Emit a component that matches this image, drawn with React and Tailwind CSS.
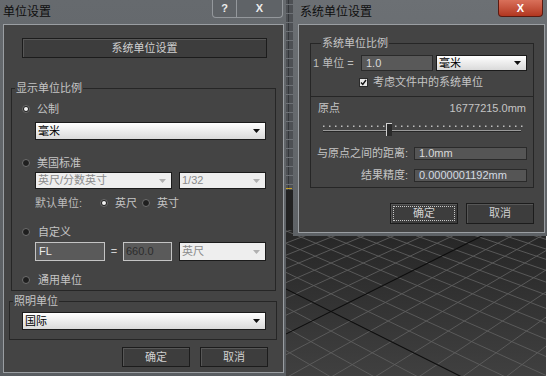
import React from "react";

const FONT = "font-['Liberation_Sans','Noto_Sans_CJK_SC',sans-serif]";

function Radio({ checked = false }) {
  return (
    <span className="flex h-[8px] w-[8px] shrink-0 items-center justify-center rounded-full border border-[#6e6e6e] bg-[#1f1f1f]">
      {checked && <span className="h-[4px] w-[4px] rounded-full bg-[#f2f2f2]" />}
    </span>
  );
}

function Select({ value, disabled = false, className = "" }) {
  return (
    <div
      className={`flex items-center justify-between border border-[#1b1b1b] pl-[2px] pr-[5px] ${
        disabled ? "bg-[#eeeeee] text-[#8a8a8a]" : "bg-gradient-to-b from-white to-[#dadada] text-black"
      } ${className}`}
    >
      <span>{value}</span>
      <svg width="7" height="4" viewBox="0 0 7 4">
        <path d="M0 0h7L3.5 4z" fill={disabled ? "#b0b0b0" : "#111"} />
      </svg>
    </div>
  );
}

function Button({ children, focused = false, className = "" }) {
  return (
    <div
      className={`relative flex items-center justify-center border border-[#1c1c1c] bg-[#3d3d3d] text-[#d0d0d0] shadow-[inset_1px_1px_0_#575757] ${className}`}
    >
      {focused && <span className="absolute inset-[2px] border border-dotted border-[#c8c8c8]" />}
      {children}
    </div>
  );
}

function Group({ label, labelLeft = "left-[3px]", className = "", children }) {
  return (
    <div className={`relative flex flex-col border border-[#262626] ${className}`}>
      {label && (
        <span className={`absolute top-[-8px] bg-[#444444] px-[1px] leading-[14px] text-[#c4c4c4] ${labelLeft}`}>
          {label}
        </span>
      )}
      {children}
    </div>
  );
}

function Viewport() {
  const O = [331, 311.5];
  const VL = [-412, -60];
  const VR = [1074, -60];
  const c = 40;
  const along = (V, t) => [O[0] + ((V[0] - O[0]) * t) / (t + c), O[1] + ((V[1] - O[1]) * t) / (t + c)];
  const seg = (V, P) => [V[0], V[1], P[0] + (P[0] - V[0]) * 6, P[1] + (P[1] - V[1]) * 6];
  const lines = [];
  for (let t = -38; t <= 220; t++) {
    lines.push({ key: `a${t}`, l: seg(VL, along(VR, t)), axis: t === 0 });
    lines.push({ key: `b${t}`, l: seg(VR, along(VL, t)), axis: t === 0 });
  }
  const ticks = [];
  for (let y = 4; y < 188; y += 9) ticks.push(y);

  return (
    <svg className="absolute left-0 top-0" width="546" height="376" viewBox="0 0 546 376">
      <defs>
        <linearGradient id="vp" gradientUnits="userSpaceOnUse" x1="0" y1="230" x2="0" y2="376">
          <stop offset="0" stopColor="#262626" />
          <stop offset="1" stopColor="#404040" />
        </linearGradient>
      </defs>
      <rect width="546" height="376" fill="url(#vp)" />
      {lines
        .filter((g) => !g.axis)
        .map((g) => (
          <line key={g.key} x1={g.l[0]} y1={g.l[1]} x2={g.l[2]} y2={g.l[3]} stroke="#5e5e5e" strokeWidth="0.9" />
        ))}
      {lines
        .filter((g) => g.axis)
        .map((g) => (
          <line key={g.key} x1={g.l[0]} y1={g.l[1]} x2={g.l[2]} y2={g.l[3]} stroke="#0c0c0c" strokeWidth="1.1" />
        ))}
      <rect x="285" y="0" width="9" height="190" fill="#4d5054" />
      <rect x="285" y="190" width="9" height="40" fill="#222222" />
      <line x1="288.5" y1="0" x2="288.5" y2="190" stroke="#33363a" />
      {ticks.map((y) => (
        <line key={y} x1="286" y1={y + 0.5} x2="293" y2={y + 0.5} stroke="#6d7176" />
      ))}
      <line x1="286" y1="188.5" x2="292" y2="188.5" stroke="#c9a326" />
    </svg>
  );
}

function Slider() {
  const dots = [];
  for (let x = 12; x <= 212; x += 6) dots.push(x);
  return (
    <svg width="222" height="20" viewBox="0 0 222 20" className="mt-[3px] block">
      {dots.map((x) => (
        <rect key={x} x={x} y="7.5" width="1.5" height="1.5" fill="#bdbdbd" />
      ))}
      <line x1="12" y1="12.5" x2="210" y2="12.5" stroke="#9a9a9a" />
      <line x1="12" y1="13.5" x2="210" y2="13.5" stroke="#262626" />
      <rect x="75" y="5" width="6" height="13" fill="#2a2a2a" />
      <line x1="75.5" y1="5" x2="75.5" y2="18" stroke="#d0d0d0" />
      <line x1="75" y1="5.5" x2="81" y2="5.5" stroke="#d0d0d0" />
    </svg>
  );
}

function UnitsWindow() {
  return (
    <div className="absolute left-0 top-0 flex h-[376px] w-[286px] flex-col bg-gradient-to-b from-[#666a6e] to-[#595d61] pb-[3px] pl-[3px] pr-[2px]">
      <div className="flex h-[24px] shrink-0 items-start justify-between">
        <span className="pt-[4px] text-[12px] leading-[16px] text-[#0e0e0e]">单位设置</span>
        <div className="mr-[1px] flex h-[18px] rounded-b-[4px] border border-t-0 border-[#94989c] bg-[#5f6367]">
          <div className="flex w-[24px] items-center justify-center border-r border-[#94989c] text-[11px] font-bold text-[#ececec]">
            ?
          </div>
          <div className="flex w-[45px] items-center justify-center text-[11px] font-bold text-[#ececec]">X</div>
        </div>
      </div>
      <div className="flex flex-1 flex-col border border-[#9a9ea2] bg-[#444444] text-[#c4c4c4]">
        <Button className="ml-[18px] mt-[13px] h-[20px] w-[245px]">系统单位设置</Button>

        <Group label="显示单位比例" className="ml-[7px] mt-[30px] h-[203px] w-[265px]">
          <div className="ml-[10px] mt-[13px] flex h-[14px] items-center gap-[7px] leading-[14px]">
            <Radio checked />
            <span>公制</span>
          </div>
          <Select value="毫米" className="ml-[23px] mt-[6px] h-[18px] w-[231px]" />

          <div className="ml-[10px] mt-[16px] flex h-[14px] items-center gap-[7px] leading-[14px]">
            <Radio />
            <span>美国标准</span>
          </div>
          <div className="ml-[23px] mt-[2px] flex gap-[7px]">
            <Select value="英尺/分数英寸" disabled className="h-[17px] w-[137px]" />
            <Select value="1/32" disabled className="h-[17px] w-[87px]" />
          </div>
          <div className="ml-[23px] mt-[7px] flex h-[14px] items-center leading-[14px]">
            <span className="w-[65px] text-[#bdbdbd]">默认单位:</span>
            <Radio checked />
            <span className="ml-[7px]">英尺</span>
            <span className="ml-[5px]">
              <Radio />
            </span>
            <span className="ml-[7px]">英寸</span>
          </div>

          <div className="ml-[10px] mt-[15px] flex h-[14px] items-center gap-[8px] leading-[14px]">
            <Radio />
            <span>自定义</span>
          </div>
          <div className="ml-[23px] mt-[3px] flex h-[19px] items-center">
            <div className="flex h-full w-[70px] items-center border border-[#c4c4c4] bg-[#5a5a5a] pl-[3px] text-[#ececec]">
              FL
            </div>
            <span className="w-[18px] text-center text-[#d0d0d0]">=</span>
            <div className="flex h-full w-[49px] items-center border border-[#c4c4c4] bg-[#5a5a5a] pl-[2px] text-[#2c2c2c]">
              660.0
            </div>
            <Select value="英尺" disabled className="ml-[7px] h-full w-[87px]" />
          </div>

          <div className="ml-[10px] mt-[12px] flex h-[14px] items-center gap-[8px] leading-[14px]">
            <Radio />
            <span>通用单位</span>
          </div>
        </Group>

        <Group label="照明单位" className="ml-[5px] mt-[10px] h-[39px] w-[268px]">
          <Select value="国际" className="ml-[12px] mt-[10px] h-[18px] w-[244px]" />
        </Group>

        <div className="mt-[7px] flex justify-end gap-[10px] pr-[15px]">
          <Button className="h-[20px] w-[68px]">确定</Button>
          <Button className="h-[20px] w-[68px]">取消</Button>
        </div>
      </div>
    </div>
  );
}

function SystemUnitsWindow() {
  return (
    <div className="absolute left-[293px] top-0 flex h-[236px] w-[254px] flex-col bg-gradient-to-b from-[#6c7074] to-[#5e6266] pb-[3px] pl-[5px] pr-[2px]">
      <div className="flex h-[24px] shrink-0 items-start justify-between">
        <span className="pl-[2px] pt-[4px] text-[12px] leading-[16px] text-[#0e0e0e]">系统单位设置</span>
        <div className="mr-[2px] flex h-[17px] w-[45px] items-center justify-center rounded-b-[4px] border border-t-0 border-[#5b1a10] bg-gradient-to-b from-[#d9705a] to-[#b2361f] text-[11px] font-bold text-white">
          X
        </div>
      </div>
      <div className="flex flex-1 flex-col border border-[#9a9ea2] bg-[#444444] text-[#c4c4c4]">
        <Group label="系统单位比例" labelLeft="left-[10px]" className="ml-[11px] mt-[18px] h-[54px] w-[224px]">
          <div className="mt-[11px] flex h-[16px] items-center">
            <span className="w-[50px] pl-[2px] text-[#bdbdbd]">1 单位 =</span>
            <div className="flex h-full w-[72px] items-center border border-[#2a2a2a] bg-[#595959] pl-[4px] text-[#dadada]">
              1.0
            </div>
            <Select value="毫米" className="ml-[3px] h-full w-[91px]" />
          </div>
          <div className="mt-[4px] flex h-[14px] items-center gap-[5px] pl-[48px] leading-[14px]">
            <span className="flex h-[9px] w-[9px] items-center justify-center border border-[#2a2a2a] bg-[#e6e6e6]">
              <svg width="7" height="7" viewBox="0 0 7 7">
                <path d="M1 3.5l1.8 2L6 1" fill="none" stroke="#111" strokeWidth="1.4" />
              </svg>
            </span>
            <span>考虑文件中的系统单位</span>
          </div>
        </Group>

        <Group className="ml-[11px] mt-[-1px] h-[92px] w-[224px]">
          <div className="mt-[4px] flex h-[14px] items-center justify-between px-[7px] leading-[14px]">
            <span>原点</span>
            <span>16777215.0mm</span>
          </div>
          <Slider />
          <div className="mt-[9px] flex h-[13px] items-center leading-[13px]">
            <span className="w-[97px] text-right">与原点之间的距离:</span>
            <div className="ml-[6px] flex h-full w-[113px] items-center border border-[#2a2a2a] bg-[#555555] pl-[4px] text-[#dadada]">
              1.0mm
            </div>
          </div>
          <div className="mt-[9px] flex h-[13px] items-center leading-[13px]">
            <span className="w-[97px] text-right">结果精度:</span>
            <div className="ml-[6px] flex h-full w-[113px] items-center border border-[#2a2a2a] bg-[#555555] pl-[4px] text-[#d4dbe2]">
              0.0000001192mm
            </div>
          </div>
        </Group>

        <div className="mt-[15px] flex justify-end gap-[8px] pr-[10px]">
          <Button focused className="h-[21px] w-[68px]">
            确定
          </Button>
          <Button className="h-[21px] w-[68px]">取消</Button>
        </div>
      </div>
    </div>
  );
}

export default function App() {
  return (
    <div className={`relative h-[379px] w-[549px] overflow-hidden bg-white text-[11px] ${FONT}`}>
      <Viewport />
      <UnitsWindow />
      <SystemUnitsWindow />
    </div>
  );
}
